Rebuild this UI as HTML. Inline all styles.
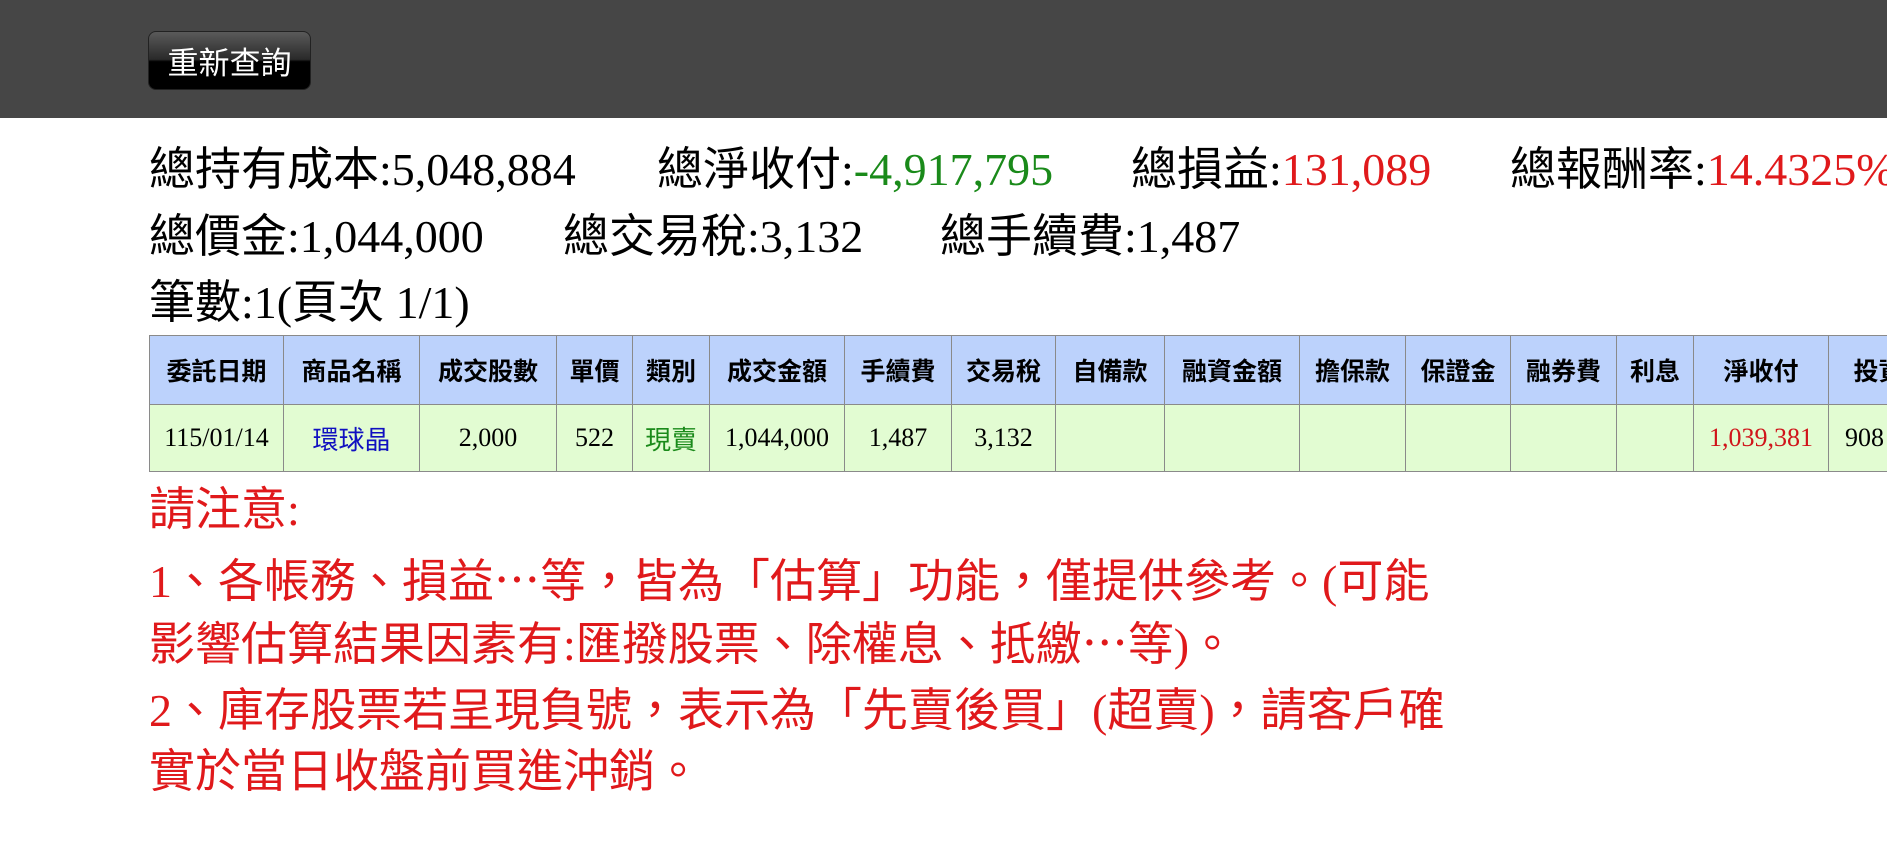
<!DOCTYPE html>
<html><head><meta charset="utf-8"><style>
html,body{margin:0;padding:0;width:1887px;height:868px;overflow:hidden;background:#fff;}
body{font-family:"Liberation Serif","Noto Sans CJK TC",serif;position:relative;}
.hdr{position:absolute;left:0;top:0;width:1887px;height:118px;background:#464646;}
.btn{position:absolute;left:148px;top:31px;width:163px;height:59px;border-radius:8px;
background:linear-gradient(#5a5a5a 0%,#2a2a2a 48%,#000 52%,#000 100%);border:1px solid #222;box-sizing:border-box;
color:#fff;font-family:"Noto Sans CJK TC",sans-serif;font-size:31px;line-height:57px;text-align:center;}
.t{position:absolute;white-space:nowrap;font-size:46px;line-height:46px;color:#000;}
.g{color:#1a8a1a}.r{color:#e0191b}
table{position:absolute;left:149px;top:335px;border-collapse:collapse;table-layout:fixed;width:1779px;}
td{border:1.5px solid #8a8a8a;text-align:center;padding:0;white-space:nowrap;overflow:hidden;}
tr.h td{background:#bcd2fc;height:68px;font-family:"Noto Sans CJK TC",sans-serif;font-weight:bold;font-size:25px;}
tr.d td{background:#e2fcd2;height:66px;font-size:26px;}
.n{position:absolute;left:149px;white-space:nowrap;color:#e0191b;font-size:46px;line-height:46px;}
.e{font-family:"Noto Sans CJK TC",sans-serif;}
</style></head><body>
<div class="hdr"><div class="btn">重新查詢</div></div>
<div class="t" style="left:149px;top:147px">總持有成本:5,048,884</div>
<div class="t" style="left:657px;top:147px">總淨收付:<span class="g">-4,917,795</span></div>
<div class="t" style="left:1131px;top:147px">總損益:<span class="r">131,089</span></div>
<div class="t" style="left:1510px;top:147px">總報酬率:<span class="r">14.4325%</span></div>
<div class="t" style="left:149px;top:214px">總價金:1,044,000</div>
<div class="t" style="left:563px;top:214px">總交易稅:3,132</div>
<div class="t" style="left:940px;top:214px">總手續費:1,487</div>
<div class="t" style="left:149px;top:280px">筆數:1(頁次 1/1)</div>
<table>
<colgroup><col style="width:134px"><col style="width:136px"><col style="width:137px"><col style="width:76px"><col style="width:77px"><col style="width:135px"><col style="width:107px"><col style="width:104px"><col style="width:109px"><col style="width:135px"><col style="width:106px"><col style="width:105px"><col style="width:106px"><col style="width:77px"><col style="width:135px"><col style="width:100px"></colgroup>
<tr class="h"><td>委託日期</td><td>商品名稱</td><td>成交股數</td><td>單價</td><td>類別</td><td>成交金額</td><td>手續費</td><td>交易稅</td><td>自備款</td><td>融資金額</td><td>擔保款</td><td>保證金</td><td>融券費</td><td>利息</td><td>淨收付</td><td>投資</td></tr>
<tr class="d"><td>115/01/14</td><td style="color:#1010c0;font-family:'Noto Sans CJK TC',sans-serif">環球晶</td><td>2,000</td><td>522</td><td style="color:#1a8a1a;font-family:'Noto Sans CJK TC',sans-serif">現賣</td><td>1,044,000</td><td>1,487</td><td>3,132</td><td></td><td></td><td></td><td></td><td></td><td></td><td style="color:#d0141a">1,039,381</td><td style="text-align:left;padding-left:16px">908</td></tr>
</table>
<div class="n" style="top:487px">請注意:</div>
<div class="n" style="top:555px">1、各帳務、損益<span class="e">…</span>等，皆為「估算」功能，僅提供參考。(可能</div>
<div class="n" style="top:618px">影響估算結果因素有:匯撥股票、除權息、抵繳<span class="e">…</span>等)。</div>
<div class="n" style="top:688px">2、庫存股票若呈現負號，表示為「先賣後買」(超賣)，請客戶確</div>
<div class="n" style="top:749px">實於當日收盤前買進沖銷。</div>
</body></html>
